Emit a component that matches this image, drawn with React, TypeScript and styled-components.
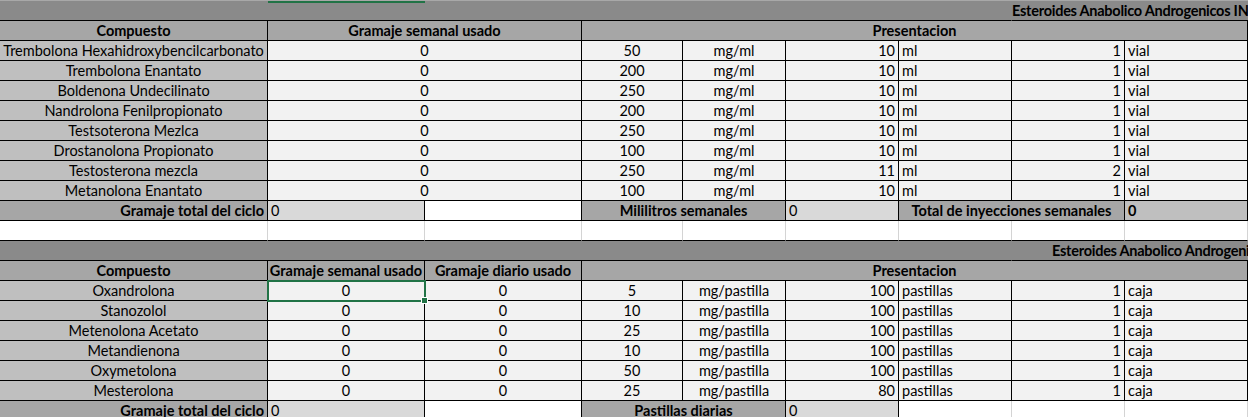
import React from 'react';
import styled, { createGlobalStyle, css } from 'styled-components';

const GlobalStyle = createGlobalStyle`
  html, body {
    margin: 0;
    padding: 0;
    background: #ffffff;
    overflow: hidden;
  }
  body {
    font-family: Lato, "Open Sans", "Liberation Sans", sans-serif;
    font-size: 14.5px;
    color: #000;
  }
`;

const DARK = '#000000';
const LIGHT = '#d4d4d4';

const Page = styled.div`
  position: relative;
  width: 1248px;
  height: 417px;
  overflow: hidden;
  border-top: 1px solid #a8a8a8;
  box-sizing: border-box;
`;

// bottom edge of the selected cell in the row above, which is scrolled out of view
const TopSelection = styled.div`
  position: absolute;
  top: 0;
  left: 268px;
  width: 157px;
  height: 2px;
  background: #217346;
`;

const Sheet = styled.div`
  display: grid;
  grid-template-columns: 268px 157px 157px 101px 103px 113px 113px 113px 123px;
  grid-auto-rows: 20px;
`;

type Align = 'left' | 'center' | 'right';

const Cell = styled.div<{
  $bg?: string;
  $align?: Align;
  $bold?: boolean;
  $span?: number;
  $right?: string;
  $bottom?: string;
  $indent?: number;
  $selected?: boolean;
}>`
  box-sizing: border-box;
  display: flex;
  align-items: center;
  justify-content: ${(p) =>
    p.$align === 'right' ? 'flex-end' : p.$align === 'left' ? 'flex-start' : 'center'};
  grid-column: span ${(p) => p.$span ?? 1};
  padding: 0 3px 0 ${(p) => 3 + (p.$indent ?? 0)}px;
  background: ${(p) => p.$bg ?? '#f2f2f2'};
  border-right: 1px solid ${(p) => p.$right ?? DARK};
  border-bottom: 1px solid ${(p) => p.$bottom ?? DARK};
  font-weight: ${(p) => (p.$bold ? 700 : 400)};
  line-height: 19px;
  white-space: nowrap;
  overflow: hidden;

  ${(p) =>
    p.$selected &&
    css`
      position: relative;
      overflow: visible;
      &::after {
        content: '';
        position: absolute;
        inset: -1px -2px -2px -1px;
        border: 2px solid #217346;
        pointer-events: none;
      }
      &::before {
        content: '';
        position: absolute;
        right: -4px;
        bottom: -4px;
        width: 5px;
        height: 5px;
        background: #217346;
        border: 1px solid #fff;
        z-index: 2;
      }
    `}
`;

const TitleFill = styled(Cell).attrs({ $bg: '#8a8a8a', $right: '#8a8a8a' })``;

const TitleText = styled(Cell)`
  background: #8a8a8a;
  border-right: none;
  font-weight: 700;
  letter-spacing: -0.25px;
  justify-content: flex-start;
  padding-right: 0;
`;

const HEAD = '#a6a6a6';
const NAME = '#bfbfbf';
const SOFT = '#d9d9d9';

type Injectable = [string, number, number, number, number];
type Oral = [string, number, number, number];

const injectables: Injectable[] = [
  ['Trembolona Hexahidroxybencilcarbonato', 0, 50, 10, 1],
  ['Trembolona Enantato', 0, 200, 10, 1],
  ['Boldenona Undecilinato', 0, 250, 10, 1],
  ['Nandrolona Fenilpropionato', 0, 200, 10, 1],
  ['Testsoterona Mezlca', 0, 250, 10, 1],
  ['Drostanolona Propionato', 0, 100, 10, 1],
  ['Testosterona mezcla', 0, 250, 11, 2],
  ['Metanolona Enantato', 0, 100, 10, 1],
];

const orals: Oral[] = [
  ['Oxandrolona', 5, 100, 1],
  ['Stanozolol', 10, 100, 1],
  ['Metenolona Acetato', 25, 100, 1],
  ['Metandienona', 10, 100, 1],
  ['Oxymetolona', 50, 100, 1],
  ['Mesterolona', 25, 80, 1],
];

const BlankRow: React.FC = () => (
  <>
    {Array.from({ length: 9 }).map((_, i) => (
      <Cell key={i} $bg="#ffffff" $right={LIGHT} $bottom={DARK} />
    ))}
  </>
);

const App: React.FC = () => {
  return (
    <Page>
      <GlobalStyle />
      <TopSelection />
      <Sheet>
        {/* Inyectables */}
        <TitleFill $span={7} />
        <TitleText $span={2} $indent={-3}>
          Esteroides Anabolico Androgenicos INT
        </TitleText>

        <Cell $bg={HEAD} $bold>Compuesto</Cell>
        <Cell $bg={HEAD} $bold $span={2}>Gramaje semanal usado</Cell>
        <Cell $bg={HEAD} $bold $span={6}>Presentacion</Cell>

        {injectables.map(([name, grams, conc, vol, count]) => (
          <React.Fragment key={name}>
            <Cell $bg={NAME}>{name}</Cell>
            <Cell $span={2}>{grams}</Cell>
            <Cell>{conc}</Cell>
            <Cell>mg/ml</Cell>
            <Cell $align="right">{vol}</Cell>
            <Cell $align="left">ml</Cell>
            <Cell $align="right">{count}</Cell>
            <Cell $align="left">vial</Cell>
          </React.Fragment>
        ))}

        <Cell $bg={HEAD} $bold $align="right">Gramaje total del ciclo</Cell>
        <Cell $bg={SOFT} $align="left">0</Cell>
        <Cell $bg="#ffffff" />
        <Cell $bg={HEAD} $bold $span={2}>Mililitros semanales</Cell>
        <Cell $bg={SOFT} $align="left">0</Cell>
        <Cell $bg={HEAD} $bold $span={2}>Total de inyecciones semanales</Cell>
        <Cell $bg={NAME} $bold $align="left">0</Cell>

        <BlankRow />

        {/* Orales */}
        <TitleFill $span={7} />
        <TitleText $span={2} $indent={37}>
          Esteroides Anabolico Androgeni
        </TitleText>

        <Cell $bg={HEAD} $bold>Compuesto</Cell>
        <Cell $bg={HEAD} $bold>Gramaje semanal usado</Cell>
        <Cell $bg={HEAD} $bold>Gramaje diario usado</Cell>
        <Cell $bg={HEAD} $bold $span={6}>Presentacion</Cell>

        {orals.map(([name, dose, pills, boxes], i) => (
          <React.Fragment key={name}>
            <Cell $bg={NAME}>{name}</Cell>
            <Cell $selected={i === 0}>0</Cell>
            <Cell>0</Cell>
            <Cell>{dose}</Cell>
            <Cell>mg/pastilla</Cell>
            <Cell $align="right">{pills}</Cell>
            <Cell $align="left">pastillas</Cell>
            <Cell $align="right">{boxes}</Cell>
            <Cell $align="left">caja</Cell>
          </React.Fragment>
        ))}

        <Cell $bg={HEAD} $bold $align="right">Gramaje total del ciclo</Cell>
        <Cell $bg={SOFT} $align="left">0</Cell>
        <Cell $bg="#ffffff" />
        <Cell $bg={HEAD} $bold $span={2}>Pastillas diarias</Cell>
        <Cell $bg={SOFT} $align="left">0</Cell>
        <Cell $bg="#ffffff" $right={LIGHT} $bottom={LIGHT} />
        <Cell $bg="#ffffff" $right={LIGHT} $bottom={LIGHT} />
        <Cell $bg="#ffffff" $right={LIGHT} $bottom={LIGHT} />
      </Sheet>
    </Page>
  );
};

export default App;
